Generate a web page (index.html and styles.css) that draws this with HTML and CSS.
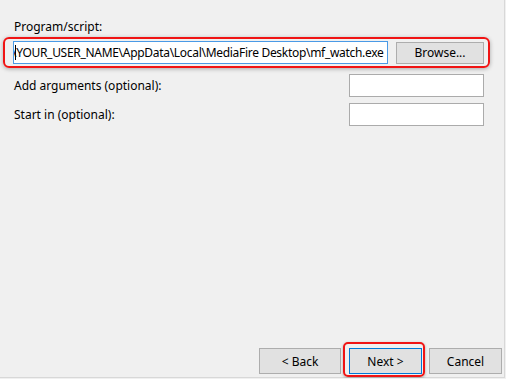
FILE: index.html
```html
<!DOCTYPE html>
<html lang="en">
<head>
    <meta charset="UTF-8">
    <title>Create Basic Task Wizard</title>
    <link rel="stylesheet" href="styles.css">
</head>
<body>

    <div class="wizard">
        <div class="content">
            <p class="label">Program/script:</p>

            <!-- highlighted program row -->
            <div class="highlight program-row">
                <div class="textbox focused">
                    <span class="path">\YOUR_USER_NAME\AppData\Local\MediaFire Desktop\mf_watch.exe</span>
                </div>
                <button class="btn browse-btn">Browse...</button>
            </div>

            <div class="field-row">
                <span class="label">Add arguments (optional):</span>
                <div class="textbox small"></div>
            </div>
            <div class="field-row">
                <span class="label">Start in (optional):</span>
                <div class="textbox small"></div>
            </div>
        </div>

        <div class="footer">
            <button class="btn back-btn">&lt; Back</button>
            <div class="highlight next-wrap">
                <button class="btn next-btn">Next &gt;</button>
            </div>
            <button class="btn cancel-btn">Cancel</button>
        </div>
    </div>

</body>
</html>
```

FILE: styles.css
```css
body {
    margin: 0;
    padding: 0;
    background: #f0f0f0;
    font-family: "Noto Sans", "Open Sans", Arial, sans-serif;
    font-size: 12px;
    color: #000;
}
.wizard {
    width: 504px;
    height: 377px;
    border-right: 1px solid #d8d8d8;
    border-bottom: 1px solid #d8d8d8;
    display: flex;
    flex-direction: column;
}
.content {
    flex: 1;
    padding-top: 19px;
}
.label {
    margin: 0 0 0 14px;
    line-height: 16px;
    white-space: nowrap;
}
p.label {
    margin-bottom: 2px;
}
.highlight {
    border: 2px solid #f01414;
    border-radius: 6px;
    box-shadow: 0 1px 4px rgba(0, 0, 0, 0.3);
}
.program-row {
    margin-left: 3px;
    width: 471px;
    padding: 2px 4px 2px 8px;
    display: flex;
    align-items: center;
    gap: 8px;
}
.textbox {
    box-sizing: border-box;
    height: 23px;
    background: #fff;
    border: 1px solid #ababab;
}
.textbox.focused {
    position: relative;
    width: 375px;
    border-color: #4a9ae6;
    display: flex;
    align-items: center;
    overflow: hidden;
    white-space: nowrap;
}
.textbox.focused::before {
    content: "";
    position: absolute;
    left: 1px;
    top: 3px;
    width: 1px;
    height: 15px;
    background: #000;
}
.path {
    line-height: 16px;
    letter-spacing: -0.3px;
    margin-left: -2px;
}
.btn {
    box-sizing: border-box;
    font-family: inherit;
    font-size: 12px;
    color: #000;
    background: #e1e1e1;
    border: 1px solid #adadad;
    padding: 0;
    width: 73px;
    height: 26px;
    margin: 0;
}
.browse-btn {
    width: 88px;
    height: 22px;
}
.field-row {
    display: flex;
    align-items: center;
    justify-content: space-between;
    width: 484px;
    margin-top: 6px;
}
.field-row:first-of-type {
    margin-top: 3px;
}
.textbox.small {
    width: 135px;
}
.footer {
    display: flex;
    justify-content: flex-end;
    align-items: flex-end;
    padding-right: 2px;
}
.back-btn {
    width: 82px;
    margin: 0 2px 3px 0;
}
.cancel-btn {
    margin: 0 0 3px 4px;
}
.next-wrap {
    padding: 4px 1px 1px 4px;
    border-radius: 5px;
    box-shadow: 0 1px 3px rgba(0, 0, 0, 0.3);
    display: flex;
}
.next-btn {
    border-color: #0078d7;
}
```
